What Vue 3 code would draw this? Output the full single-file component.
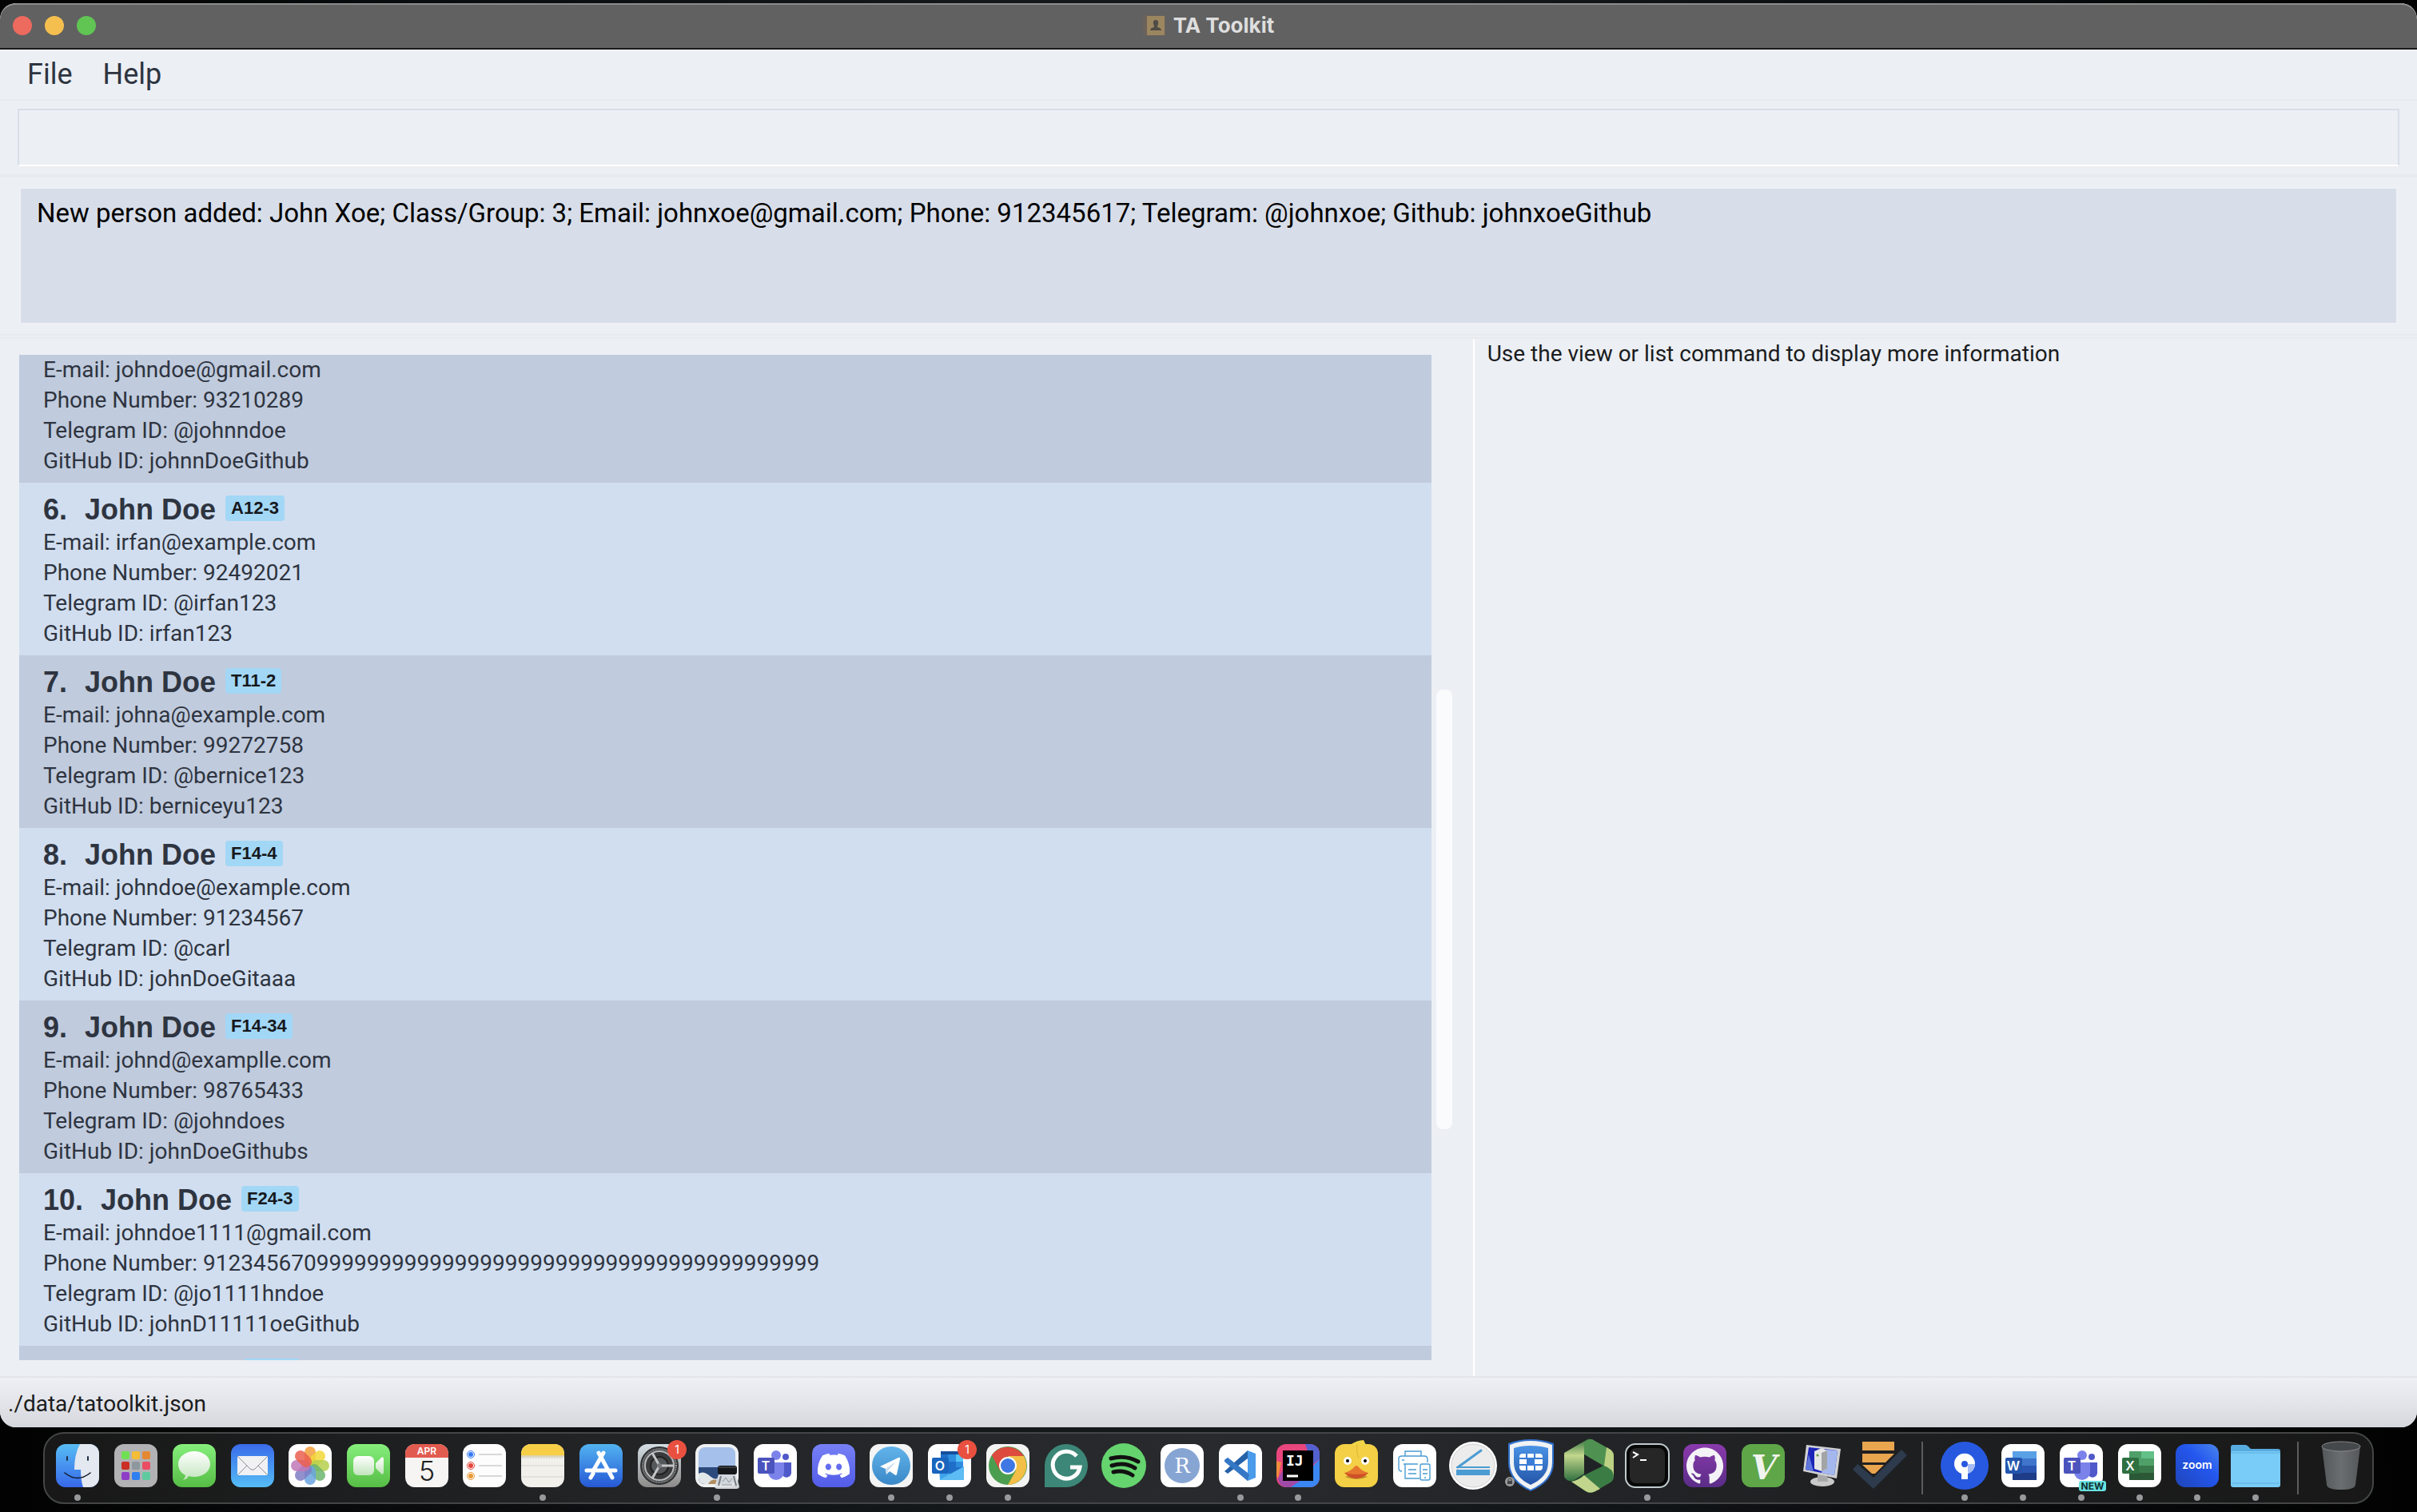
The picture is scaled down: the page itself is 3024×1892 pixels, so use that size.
<script setup>
const persons = [
  { email: 'johndoe@gmail.com', phone: '93210289', telegram: '@johnndoe', github: 'johnnDoeGithub' },
  { id: 6, name: 'John Doe', tag: 'A12-3', email: 'irfan@example.com', phone: '92492021', telegram: '@irfan123', github: 'irfan123' },
  { id: 7, name: 'John Doe', tag: 'T11-2', email: 'johna@example.com', phone: '99272758', telegram: '@bernice123', github: 'berniceyu123' },
  { id: 8, name: 'John Doe', tag: 'F14-4', email: 'johndoe@example.com', phone: '91234567', telegram: '@carl', github: 'johnDoeGitaaa' },
  { id: 9, name: 'John Doe', tag: 'F14-34', email: 'johnd@examplle.com', phone: '98765433', telegram: '@johndoes', github: 'johnDoeGithubs' },
  { id: 10, name: 'John Doe', tag: 'F24-3', email: 'johndoe1111@gmail.com', phone: '9123456709999999999999999999999999999999999999999', telegram: '@jo1111hndoe', github: 'johnD11111oeGithub' },
]

const tile = (fill) => `<rect x="9" y="9" width="54" height="54" rx="12" fill="${fill}"/>`
const badge = '<circle cx="58" cy="16" r="12" fill="#e9503f"/><text x="58" y="21" font-size="14" fill="#fff" text-anchor="middle">1</text>'
const office = (letter, fill) => `<rect x="14" y="26" width="21" height="20" rx="2" fill="${fill}"/><text x="24" y="42" font-size="16" font-weight="600" fill="#fff" text-anchor="middle">${letter}</text>`
const teams = tile('#fff')
  + '<circle cx="37" cy="23" r="6" fill="#7b83eb"/><circle cx="49" cy="25" r="4" fill="#5059c9"/>'
  + '<path d="M44 32H56V43A6 6 0 0 1 44 46Z" fill="#5059c9"/><path d="M27 32H47V44A10 10 0 0 1 27 44Z" fill="#7b83eb"/>'
  + office('T', '#4b53bc')
const petals = ['#f2a03c', '#f2d83b', '#b5d04c', '#6cb56f', '#6aa5e0', '#7f7cc4', '#bf79b8', '#ea5f50']
  .map((c, i) => `<rect x="29" y="12" width="14" height="24" rx="7" fill="${c}" opacity=".85" transform="rotate(${i * 45} 36 36)"/>`).join('')
const pads = ['#6fdf53', '#f4bd35', '#e58832', '#cc3025', '#8d979d', '#ea4d63', '#8e3fc8', '#2f7ff0', '#5fcaa0']
  .map((c, i) => `<rect x="${18 + (i % 3) * 13}" y="${18 + Math.floor(i / 3) * 13}" width="10" height="10" rx="2" fill="${c}"/>`).join('')

const apps = [
  { name: 'Finder', on: true, art: tile('url(#g-finder)') + '<path d="M39 9H51A12 12 0 0 1 63 21V51A12 12 0 0 1 51 63H43Q40 54 40 41H32Q32 22 39 9Z" fill="#e4e8f0"/><path d="M23 25V29M49 25V29" stroke="#1c2c44" stroke-width="2" stroke-linecap="round"/><path d="M20 45Q36 58 52 45" fill="none" stroke="#111c2c" stroke-width="1.6" stroke-linecap="round"/>' },
  { name: 'Launchpad', art: tile('#b2b2b4') + pads },
  { name: 'Messages', art: tile('url(#g-green)') + '<path d="M36 18C47 18 56 25 56 34S47 50 36 50Q32 50 29 49Q27 53 22 54Q25 51 25 48C19 45 16 40 16 34C16 25 25 18 36 18Z" fill="url(#g-pale)"/>' },
  { name: 'Mail', art: tile('url(#g-mail)') + '<rect x="17" y="24" width="38" height="24" rx="1" fill="#f1f1f3"/><path d="M17 24L33 40Q36 43 39 40L55 24M17 48L29 36M55 48L43 36" fill="none" stroke="#8d8f96"/>' },
  { name: 'Photos', art: tile('#fff') + petals },
  { name: 'FaceTime', art: tile('url(#g-green)') + '<rect x="17" y="24" width="26" height="24" rx="6" fill="url(#g-pale)"/><path d="M45 33L52 26Q55 24 55 28V44Q55 48 52 46L45 39Z" fill="url(#g-pale)"/>' },
  { name: 'Calendar', art: tile('#f6f5f3') + '<path d="M9 26V21A12 12 0 0 1 21 9H51A12 12 0 0 1 63 21V26Z" fill="#e25b50"/><text x="36" y="22" font-size="12" font-weight="600" fill="#fff" text-anchor="middle">APR</text><text x="36" y="55" font-size="34" font-weight="300" fill="#222" text-anchor="middle">5</text>' },
  { name: 'Reminders', art: tile('#fdfdfd') + '<g fill="none" stroke-width="1"><circle cx="19" cy="22" r="4.5" stroke="#3478f6"/><circle cx="19" cy="36" r="4.5" stroke="#e5463b"/><circle cx="19" cy="49" r="4.5" stroke="#ea9a35"/></g><circle cx="19" cy="22" r="3" fill="#3478f6"/><circle cx="19" cy="36" r="3" fill="#e5463b"/><circle cx="19" cy="49" r="3" fill="#ea9a35"/><path d="M29 22H58M29 36H58M29 49H58" stroke="#b5b5b9"/>' },
  { name: 'Notes', on: true, art: tile('#f1f0eb') + '<path d="M9 23V21A12 12 0 0 1 21 9H51A12 12 0 0 1 63 21V23Z" fill="#f7cf46"/><path d="M9 24H63" stroke="#c9b779"/><path d="M10 26H62" stroke="#aaa" stroke-dasharray="1 1"/><path d="M9 36H63M9 50H63" stroke="#d6d5d0"/>' },
  { name: 'App Store', art: tile('url(#g-store)') + '<path d="M26 46L23 51M33 20L50 51M18 42H54" stroke="#fff" stroke-width="5" stroke-linecap="round"/><path d="M39 20L27 41" stroke="#fff" stroke-width="5" stroke-linecap="round"/>' },
  { name: 'System Settings', art: tile('url(#g-metal)') + '<circle cx="36" cy="36" r="24" fill="#2f3133"/><circle cx="36" cy="36" r="21" fill="#4c4e50" stroke="#999" stroke-width="2" stroke-dasharray="1 1"/><circle cx="36" cy="36" r="18" fill="#3a3b3d" stroke="#b7b9bb" stroke-width="2"/><circle cx="36" cy="36" r="11" fill="#55585a" stroke="#222" stroke-width="2"/><path d="M36 36H54M36 36L27 20M36 36L27 52" stroke="#c3c5c7" stroke-width="3"/><circle cx="36" cy="36" r="3" fill="#77797b"/>' + badge },
  { name: 'Preview', on: true, art: tile('#eef0f1') + '<rect x="13" y="13" width="46" height="46" rx="8" fill="#a5c0ea"/><path d="M13 38H59V51Q59 59 51 59H21Q13 59 13 51Z" fill="#2d4a7d"/><path d="M13 46Q19 42 26 48T36 52V59H21Q13 59 13 51Z" fill="#e2e7ea"/><path d="M25 59Q29 52 36 54V59Z" fill="#b18e62"/><path d="M38 47H60L64 62Q64 65 60 65H37Q33 65 33 62Z" fill="#dfe3e5" opacity=".92"/><path d="M41 49L38 61M57 49L60 61" stroke="#777c80" stroke-width="2"/><path d="M43 56L47 51L51 57L55 52M42 60H55" stroke="#8b9298" fill="none"/><rect x="37" y="36" width="24" height="11" rx="3" fill="#15171a"/><path d="M38 38H60" stroke="#5d6165"/>' },
  { name: 'Microsoft Teams classic', art: teams },
  { name: 'Discord', art: tile('url(#g-discord)') + '<path transform="translate(16 16) scale(1.67)" fill="#fff" d="M20.317 4.37a19.79 19.79 0 00-4.885-1.515c-.3.4-.5.9-.687 1.286-1.845-.276-3.68-.276-5.487 0-.164-.393-.406-.874-.696-1.286a19.74 19.74 0 00-4.885 1.515C.533 9.046-.319 13.58.099 18.058c2.053 1.508 4.072 2.479 6.024 3.085.546-.658.957-1.323 1.31-2.022-.694-.353-1.316-.655-1.914-.998l.364-.419c3.928 1.794 8.25 1.794 12.217 0l.367.42c-.603.35-1.225.649-1.914.998.36.698.772 1.363 1.31 2.021 1.961-.607 3.98-1.578 6.033-3.085.5-5.177-.838-9.674-3.579-13.688zM8.02 15.331c-1.183 0-2.157-1.086-2.157-2.419s.956-2.419 2.157-2.419c1.211 0 2.176 1.095 2.157 2.419 0 1.333-.956 2.419-2.157 2.419zm7.975 0c-1.183 0-2.157-1.086-2.157-2.419s.955-2.419 2.157-2.419c1.21 0 2.175 1.095 2.156 2.419 0 1.333-.946 2.419-2.156 2.419z"/>' },
  { name: 'Telegram', on: true, art: tile('#f4f4f4') + '<circle cx="36" cy="36" r="24" fill="url(#g-telegram)"/><path d="M22 37L45 26Q48 25 47 28L43 47Q42 49 40 47L34 43L30 47L29 40Z" fill="#fff"/><path d="M29 40L42 31L33 41L30 47Z" fill="#c4dcee"/>' },
  { name: 'Microsoft Outlook', on: true, art: tile('#fff') + '<rect x="25" y="18" width="28" height="30" rx="2" fill="#1f6fc9"/><path d="M25 18H53V22H25Z" fill="#154f9c"/><path d="M34 22H44V31H34Z" fill="#2f8de0"/><path d="M44 22H53V31H44Z" fill="#55c3f5"/><path d="M44 31H53V38H44Z" fill="#2f8de0"/><path d="M23 38L38 47L54 37V54H24Z" fill="#3fa3ea"/><path d="M23 54L54 37V54Z" fill="#5cbcf3"/>' + office('O', '#1a65bd') + badge },
  { name: 'Google Chrome', on: true, art: tile('#f3f3f2') + '<circle cx="36" cy="36" r="24" fill="#4b9d4f"/><path d="M16 23A24 24 0 0 1 56 24H36L26 42Z" fill="#dc4b3e"/><path d="M56 24A24 24 0 0 1 36 60L46 42L36 24Z" fill="#f3bf46"/><circle cx="36" cy="36" r="11" fill="#fff"/><circle cx="36" cy="36" r="9" fill="#3f78e4"/>' },
  { name: 'Grammarly', art: '<path d="M36 9A27 27 0 1 1 36 63H9V36A27 27 0 0 1 36 9Z" fill="#3c8777"/><path d="M49 24A17 17 0 1 0 53 38H41" fill="none" stroke="#fff" stroke-width="5"/>' },
  { name: 'Spotify', art: '<circle cx="36" cy="36" r="28" fill="#65d46e"/><path d="M20 27Q38 22 54 31M21 36Q37 31 50 39M23 44Q36 41 47 48" fill="none" stroke="#111" stroke-width="5" stroke-linecap="round"/>' },
  { name: 'RStudio', art: tile('#fff') + '<circle cx="36" cy="36" r="22" fill="#87a5d3"/><text x="36" y="45" font-size="26" class="slab" fill="#fff" text-anchor="middle">R</text>' },
  { name: 'Visual Studio Code', on: true, art: tile('#fff') + '<path d="M16 29L20 26L45 45V55Z" fill="#2f7fcb"/><path d="M16 43L20 46L45 27V17Z" fill="#2662a8"/><path d="M45 17L55 21V51L45 55Z" fill="#4a9bea"/><path d="M16 29L20 26L47 47L45 55L16 31Z" fill="#3578c6"/>' },
  { name: 'IntelliJ IDEA', on: true, art: tile('#e8467c') + '<path d="M45 9H51A12 12 0 0 1 63 21V28L54 35Z" fill="#5360cf"/><path d="M63 28V51A12 12 0 0 1 51 63H27L40 50L56 35Z" fill="#3a86f2"/><path d="M9 30L15 32L11 52L9 49Z" fill="#f08b3c"/><path d="M11 52L18 40L40 54L27 63H21Q13 63 11 52Z" fill="#a04aa8"/><rect x="17" y="17" width="38" height="38"/><text x="21" y="36" font-size="18" font-weight="700" class="mono" fill="#fff">IJ</text><path d="M22 49H36" stroke="#fff" stroke-width="3"/>' },
  { name: 'Cyberduck', art: tile('#f3d045') + '<path d="M28 10Q37 4 45 4L48 10Z" fill="#f0d548"/><path d="M37 9Q35 18 39 27" fill="none" stroke="#d9b838"/><path d="M22 50Q36 56 50 50L36 44Z" fill="#bd8e2f"/><path d="M21 45Q29 43 33 38Q36 34 39 38Q43 43 51 45Q44 52 36 52T21 45Z" fill="#e5762e"/><path d="M21 45Q36 49 51 45Q44 52 36 52T21 45Z" fill="#ce5027"/><circle cx="25" cy="30" r="5" fill="#fff"/><circle cx="47" cy="30" r="5" fill="#fff"/><circle cx="25" cy="30" r="2"/><circle cx="47" cy="30" r="2"/>' },
  { name: 'HP Smart', art: tile('#fff') + '<g fill="none" stroke="#4b9cd3" stroke-width="1.4"><path d="M24 24V18H44V24"/><path d="M20 43Q16 43 16 39V27Q16 24 20 24H48Q52 24 52 28V32"/><path d="M22 34H40M24 34V52H42M28 41H38M28 46H38"/><rect x="43" y="34" width="12" height="20" rx="2"/><path d="M46 41H52M46 46H52M48 51H50M20 29H23"/></g>' },
  { name: 'Scanner', art: '<circle cx="36" cy="36" r="30" fill="#fff"/><circle cx="36" cy="36" r="27" fill="#ececec" stroke="#cfcfcf"/><path d="M17 38L46 17" stroke="#4b9cd3" stroke-width="3" stroke-linecap="round"/><path d="M15 37H57V39H15Z" fill="#4b9cd3"/><path d="M15 41H57V48H15Z" fill="#4b9cd3"/>' },
  { name: 'FortiClient', art: '<path d="M36 3Q50 3 65 8V32Q65 56 36 68Q8 56 8 32V8Q22 3 36 3Z" fill="#2f6fcb"/><path d="M36 5Q50 5 63 10V32Q63 54 36 66Q10 54 10 32V10Q22 5 36 5Z" fill="#f0f2f4"/><path d="M36 11Q48 11 58 14V32Q58 50 36 60Q15 50 15 32V14Q24 11 36 11Z" fill="url(#g-forti)"/><rect x="22" y="21" width="29" height="21" rx="4" fill="#fff"/><path d="M22 27H51M22 35H51M31 21V27M41 21V27M31 35V42M41 35V42" stroke="#3a7cd6" stroke-width="2"/><rect x="31" y="27" width="10" height="8" fill="#3a7cd6"/><circle cx="10" cy="56" r="6" fill="#9a9c9e"/><rect x="7" y="55" width="6" height="4" fill="#444"/><path d="M8 55V53Q10 51 12 53V55" fill="none" stroke="#444"/>' },
  { name: 'Node Viewer', art: '<path d="M36 2L5 20V50Q10 58 18 54L30 46V22Q29 10 36 2Z" fill="url(#g-leaf)"/><path d="M30 8Q34 2 40 3L63 16Q67 19 67 24V52L62 44L30 22Z" fill="#4f9150"/><path d="M58 13L63 16Q67 19 67 24V50Q67 40 55 36Z" fill="#bcd183"/><path d="M14 56Q22 54 30 47L54 36Q66 40 67 50Q67 54 63 57L42 69Q36 71 32 68Z" fill="#3b7c45"/><path d="M14 56Q24 54 30 48L50 65L42 69Q36 71 32 68Z" fill="#c2d58c"/><path d="M30 22L54 36L30 48Z" fill="#202325"/>' },
  { name: 'Terminal', on: true, art: '<rect x="9" y="9" width="54" height="54" rx="12" fill="#070707" stroke="#c0cbcf" stroke-width="2"/><rect x="14" y="14" width="44" height="44" rx="8" fill="#262626"/><path d="M18 19L24 22L18 26" fill="none" stroke="#fff" stroke-width="2"/><path d="M27 29H35" stroke="#fff" stroke-width="2"/>' },
  { name: 'GitHub Desktop', art: tile('url(#g-purple)') + '<path transform="translate(13 13) scale(1.92)" fill="#f4f2f7" d="M12 .297c-6.63 0-12 5.373-12 12 0 5.303 3.438 9.8 8.205 11.385.6.113.82-.258.82-.577 0-.285-.01-1.04-.015-2.04-3.338.724-4.042-1.61-4.042-1.61C4.422 18.07 3.633 17.7 3.633 17.7c-1.087-.744.084-.729.084-.729 1.205.084 1.838 1.236 1.838 1.236 1.07 1.835 2.809 1.305 3.495.998.108-.776.417-1.305.76-1.605-2.665-.3-5.466-1.332-5.466-5.93 0-1.31.465-2.38 1.235-3.22-.135-.303-.54-1.523.105-3.176 0 0 1.005-.322 3.3 1.23.96-.267 1.98-.399 3-.405 1.02.006 2.04.138 3 .405 2.28-1.552 3.285-1.23 3.285-1.23.645 1.653.24 2.873.12 3.176.765.84 1.23 1.91 1.23 3.22 0 4.61-2.805 5.625-5.475 5.92.42.36.81 1.096.81 2.22 0 1.606-.015 2.896-.015 3.286 0 .315.21.69.825.57C20.565 22.092 24 17.592 24 12.297c0-6.627-5.373-12-12-12"/>' },
  { name: 'MacVim', art: tile('#5fa648') + '<text x="37" y="53" font-size="42" font-weight="700" font-style="italic" class="slab" fill="#f1f4ee" text-anchor="middle">V</text>' },
  { name: 'Remote Desktop', art: '<ellipse cx="37" cy="56" rx="15" ry="6" fill="#c9c9c9"/><path d="M31 47H43L44 56H31Z" fill="#a9a9a9"/><path d="M17 10L60 15L55 52L13 43Z" fill="#cfd0d2"/><path d="M20 13L56 17L52 48L16 41Z" fill="#1d25b8"/><path d="M42 16L56 17L52 48L36 45Z" fill="#a5b8ee"/><path d="M20 22L26 43L16 41Z" fill="#5f77dd"/><path d="M27 18L36 14L43 17V40L36 43L27 40Z" fill="#e6e6e4"/><path d="M36 20L43 17V40L36 43Z" fill="#a2a4a6"/><circle cx="31" cy="23" r="1.5" fill="#5c9b3e"/>' },
  { name: 'Task Filter', art: '<path d="M14 6H54V17H14ZM14 21H54L43 32H14ZM14 35H41L30 46H26Z" fill="#eaa54f"/><path d="M2 41L8 34L28 51L63 16L70 23L28 65Z" fill="#2d3b4d"/>' },
]

const pinned = [
  { name: 'Sourcetree', on: true, art: '<circle cx="36" cy="36" r="30" fill="#2759e0"/><path d="M32 53V46A13 13 0 1 1 40 46V53Z" fill="#fff"/><path d="M40 46A13 13 0 0 0 49 34L40 34Z" fill="#a5bdf3"/><circle cx="36" cy="34" r="4" fill="#2759e0"/>' },
  { name: 'Microsoft Word', on: true, art: tile('#fff') + '<path d="M23 18H53V27H23Z" fill="#5aa1e6"/><path d="M23 27H53V36H23Z" fill="#3f76cc"/><path d="M23 36H53V45H23Z" fill="#2a55b0"/><path d="M23 45H53V54H23Z" fill="#1e3c87"/>' + office('W', '#2455ad') },
  { name: 'Microsoft Teams', on: true, art: teams + '<rect x="33" y="55" width="34" height="13" rx="3" fill="#67e3e2"/><text x="50" y="66" font-size="12" font-weight="700" fill="#10302f" text-anchor="middle">NEW</text>' },
  { name: 'Microsoft Excel', on: true, art: tile('#fff') + '<path d="M23 18H38V36H23Z" fill="#4f9f68"/><path d="M38 18H54V27H38Z" fill="#62c088"/><path d="M38 27H54V36H38Z" fill="#4f9f68"/><path d="M23 36H54V45H23Z" fill="#39784a"/><path d="M23 45H54V54H23Z" fill="#2b5837"/>' + office('X', '#2f7041') },
  { name: 'Zoom', on: true, art: tile('url(#g-zoom)') + '<text x="36" y="40" font-size="14" font-weight="600" fill="#fff" text-anchor="middle">zoom</text>' },
  { name: 'Downloads', on: true, art: '<path d="M5 22V13Q5 10 8 10H23Q25 10 27 12L30 15H64Q67 15 67 18V22Z" fill="#58abdf"/><path d="M5 20Q5 18 8 18H64Q67 18 67 20V60Q67 63 64 63H8Q5 63 5 60Z" fill="#7accf8"/><path d="M5 20H67M6 58H66" stroke="#5cafdc"/>' },
]

const trash = '<path d="M12 12L18 60Q19 66 36 66T54 60L60 12Z" fill="url(#g-trash)"/><ellipse cx="36" cy="12" rx="24" ry="6" fill="#46494b" stroke="#87898b"/>'
</script>

<template>
  <div class="desktop">
    <svg class="defs" width="0" height="0" aria-hidden="true">
      <defs>
        <linearGradient id="g-finder" x2="0" y2="1"><stop stop-color="#57bdf4" /><stop offset="1" stop-color="#3768ea" /></linearGradient>
        <linearGradient id="g-green" x2="0" y2="1"><stop stop-color="#86ef7c" /><stop offset="1" stop-color="#56bd45" /></linearGradient>
        <linearGradient id="g-pale" x2="0" y2="1"><stop stop-color="#fff" /><stop offset="1" stop-color="#c3e5bd" /></linearGradient>
        <linearGradient id="g-mail" x2="0" y2="1"><stop stop-color="#3a6bea" /><stop offset="1" stop-color="#55bdf6" /></linearGradient>
        <linearGradient id="g-store" x2="0" y2="1"><stop stop-color="#52b3f0" /><stop offset="1" stop-color="#2658d5" /></linearGradient>
        <linearGradient id="g-metal" x2="0" y2="1"><stop stop-color="#d3dee4" /><stop offset="1" stop-color="#8d8b89" /></linearGradient>
        <linearGradient id="g-discord" x2="0" y2="1"><stop stop-color="#7780f5" /><stop offset="1" stop-color="#525ce8" /></linearGradient>
        <linearGradient id="g-telegram" x2="0" y2="1"><stop stop-color="#62b4ea" /><stop offset="1" stop-color="#3a88c8" /></linearGradient>
        <linearGradient id="g-forti" x2="0" y2="1"><stop stop-color="#4a93e6" /><stop offset="1" stop-color="#2455a8" /></linearGradient>
        <linearGradient id="g-leaf" x2="0" y2="1"><stop stop-color="#2f7040" /><stop offset=".4" stop-color="#c3d78d" /><stop offset="1" stop-color="#2f7040" /></linearGradient>
        <linearGradient id="g-purple" x2="0" y2="1"><stop stop-color="#8a3aac" /><stop offset="1" stop-color="#5a2d87" /></linearGradient>
        <linearGradient id="g-zoom" x1="1" x2="0" y2="1"><stop stop-color="#4a86ec" /><stop offset=".4" stop-color="#2457ef" /><stop offset="1" stop-color="#1f45b8" /></linearGradient>
        <linearGradient id="g-trash"><stop stop-color="#55585a" /><stop offset=".5" stop-color="#6b6e70" /><stop offset="1" stop-color="#55585a" /></linearGradient>
      </defs>
    </svg>

    <main class="window">
      <header class="titlebar">
        <div class="lights">
          <button class="light close" aria-label="Close"></button>
          <button class="light minimize" aria-label="Minimize"></button>
          <button class="light zoom" aria-label="Zoom"></button>
        </div>
        <h1 class="title">
          <svg width="28" height="26" viewBox="0 0 28 26" aria-hidden="true">
            <rect width="28" height="26" rx="2" fill="#6b625c" />
            <rect x="5" y="1" width="22" height="24" fill="#9c8660" />
            <path d="M16 6Q20 6 19 11Q18 13 18 15Q23 16 23 19H9Q9 16 14 15Q14 13 13 11Q12 6 16 6Z" fill="#4f4b45" />
          </svg>
          TA Toolkit
        </h1>
      </header>

      <nav class="menubar">
        <button class="menu">File</button>
        <button class="menu">Help</button>
      </nav>

      <div class="command">
        <input class="command-box" type="text" aria-label="Command" />
      </div>

      <section class="result">
        <p class="result-text">New person added: John Xoe; Class/Group: 3; Email: johnxoe@gmail.com; Phone: 912345617; Telegram: @johnxoe; Github: johnxoeGithub</p>
      </section>

      <div class="split">
        <section class="list-pane">
          <ul class="list">
            <li v-for="p in persons" :key="p.phone" class="person">
              <h2 v-if="p.name" class="person-head">
                <span class="number">{{ p.id }}.</span>
                <span>{{ p.name }}</span>
                <span class="tag">{{ p.tag }}</span>
              </h2>
              <p>E-mail: {{ p.email }}</p>
              <p>Phone Number: {{ p.phone }}</p>
              <p>Telegram ID: {{ p.telegram }}</p>
              <p>GitHub ID: {{ p.github }}</p>
            </li>
            <li class="person peek" aria-hidden="true"><span class="tag"></span></li>
          </ul>
          <div class="track"><div class="thumb"></div></div>
        </section>
        <div class="divider"></div>
        <section class="info-pane">
          <p>Use the view or list command to display more information</p>
        </section>
      </div>

      <footer class="status">./data/tatoolkit.json</footer>
    </main>

    <nav class="dock" aria-label="Dock">
      <button v-for="app in apps" :key="app.name" class="app" :class="{ running: app.on }" :aria-label="app.name">
        <svg class="icon" viewBox="0 0 72 72" v-html="app.art"></svg>
      </button>
      <span class="separator"></span>
      <button v-for="app in pinned" :key="app.name" class="app" :class="{ running: app.on }" :aria-label="app.name">
        <svg class="icon" viewBox="0 0 72 72" v-html="app.art"></svg>
      </button>
      <span class="separator"></span>
      <button class="app" aria-label="Trash">
        <svg class="icon" viewBox="0 0 72 72" v-html="trash"></svg>
      </button>
    </nav>
  </div>
</template>

<style>
body {
  background: #050606;
}
</style>

<style scoped>
* {
  box-sizing: border-box;
}

h1,
h2,
p,
ul {
  margin: 0;
  padding: 0;
}

button {
  padding: 0;
  border: 0;
  background: none;
  font: inherit;
  color: inherit;
}

.desktop {
  min-height: 100vh;
  display: flex;
  flex-direction: column;
  gap: 6px;
  padding: 4px 0 10px;
  background: linear-gradient(90deg, #020202, #14181b 40%, #14181b 60%, #020202);
  font-family: Roboto, "Liberation Sans", sans-serif;
  font-size: 28px;
  line-height: 38px;
  color: #1a1c20;
}

.defs {
  position: absolute;
}

.window {
  flex: 1;
  display: flex;
  flex-direction: column;
  border-radius: 20px;
  overflow: hidden;
  background: #eceff4;
}

.titlebar {
  display: grid;
  grid-template-columns: 1fr auto 1fr;
  align-items: center;
  height: 58px;
  padding: 0 16px 2px;
  border-top: 2px solid #8b8c8b;
  border-bottom: 2px solid #1a1a1a;
  border-radius: 20px 20px 0 0;
  background: #616161;
}

.lights {
  display: flex;
  gap: 16px;
}

.light {
  width: 24px;
  height: 24px;
  border-radius: 50%;
}

.close {
  background: #ed6a5e;
}

.minimize {
  background: #f5bf4f;
}

.zoom {
  background: #61c554;
}

.title {
  display: flex;
  align-items: center;
  gap: 10px;
  font: 700 26px/32px Inter, sans-serif;
  color: #dedede;
}

.menubar {
  display: flex;
  gap: 38px;
  height: 64px;
  padding: 0 34px;
  border-bottom: 2px solid #e7eaef;
}

.menu {
  font-size: 36px;
  line-height: 60px;
  color: #2e3440;
}

.command {
  padding: 10px 22px;
  border-bottom: 4px solid #e7eaef;
}

.command-box {
  display: block;
  width: 100%;
  height: 72px;
  padding: 0 20px;
  border: 2px solid #d8dee9;
  border-bottom-color: #fff;
  background: #eceff4;
  font: inherit;
  outline: none;
}

.result {
  padding: 14px 26px;
  border-bottom: 2px solid #e7eaef;
}

.result-text {
  min-height: 168px;
  padding: 9px 20px;
  outline: 2px solid #eff1f6;
  background: #d8dee9;
  font-size: 33px;
  line-height: 44px;
  color: #000;
}

.split {
  flex: 1;
  display: grid;
  grid-template-columns: 25fr 2px 16fr;
  margin-top: 2px;
  border-top: 2px solid #e7eaef;
  border-bottom: 2px solid #e3e5ea;
}

.list-pane {
  display: flex;
  gap: 6px;
  padding: 20px 26px 20px 24px;
}

.list {
  flex: 1;
  list-style: none;
  color: #2e3440;
}

.person {
  padding: 0 30px 8px;
  background: #c0cbdd;
}

.person:nth-child(even) {
  background: #d1deef;
}

.person-head {
  display: flex;
  align-items: flex-start;
  gap: 12px;
  height: 56px;
  padding-top: 12px;
  font: 700 36px/44px "Liberation Sans", sans-serif;
}

.number {
  margin-right: 10px;
}

.tag {
  margin-top: 4px;
  padding: 0 7px;
  border-radius: 4px;
  background: #a3d7f6;
  font: 700 22px/32px "Liberation Sans", sans-serif;
  color: #16181c;
}

.peek {
  display: flex;
  height: 18px;
  padding: 12px 282px 0;
  overflow: hidden;
}

.peek .tag {
  width: 68px;
}

.track {
  width: 20px;
}

.track::before {
  content: "";
  display: block;
  height: calc(33% + 4px);
}

.thumb {
  height: calc(44% - 4px);
  border-radius: 8px;
  background: #fafbfd;
}

.divider {
  background: #fff;
}

.info-pane {
  padding: 0 16px;
}

.status {
  height: 62px;
  padding: 14px 10px;
  background: linear-gradient(#eceff4, #e4e5ea 50%, #d6d7dc);
}

.dock {
  display: flex;
  height: 90px;
  margin: 0 54px;
  padding: 0 3px 0 5px;
  border: 2px solid #434546;
  border-radius: 26px;
  background: linear-gradient(90deg, #181818, #222426 25%, #282a2d 50%, #202123 75%, #181818);
}

.app {
  flex: 1;
  display: flex;
  flex-direction: column;
  align-items: center;
  padding-top: 4px;
}

.running::after {
  content: "";
  width: 8px;
  height: 8px;
  border-radius: 50%;
  background: #98999b;
}

.icon {
  width: 72px;
  height: 72px;
  overflow: visible;
  font-family: Inter, sans-serif;
}

.icon :deep(.slab) {
  font-family: "DejaVu Serif", serif;
}

.icon :deep(.mono) {
  font-family: "DejaVu Sans Mono", monospace;
}

.separator {
  width: 2px;
  height: 66px;
  margin: 10px 16px;
  background: #5b5c5e;
}
</style>
